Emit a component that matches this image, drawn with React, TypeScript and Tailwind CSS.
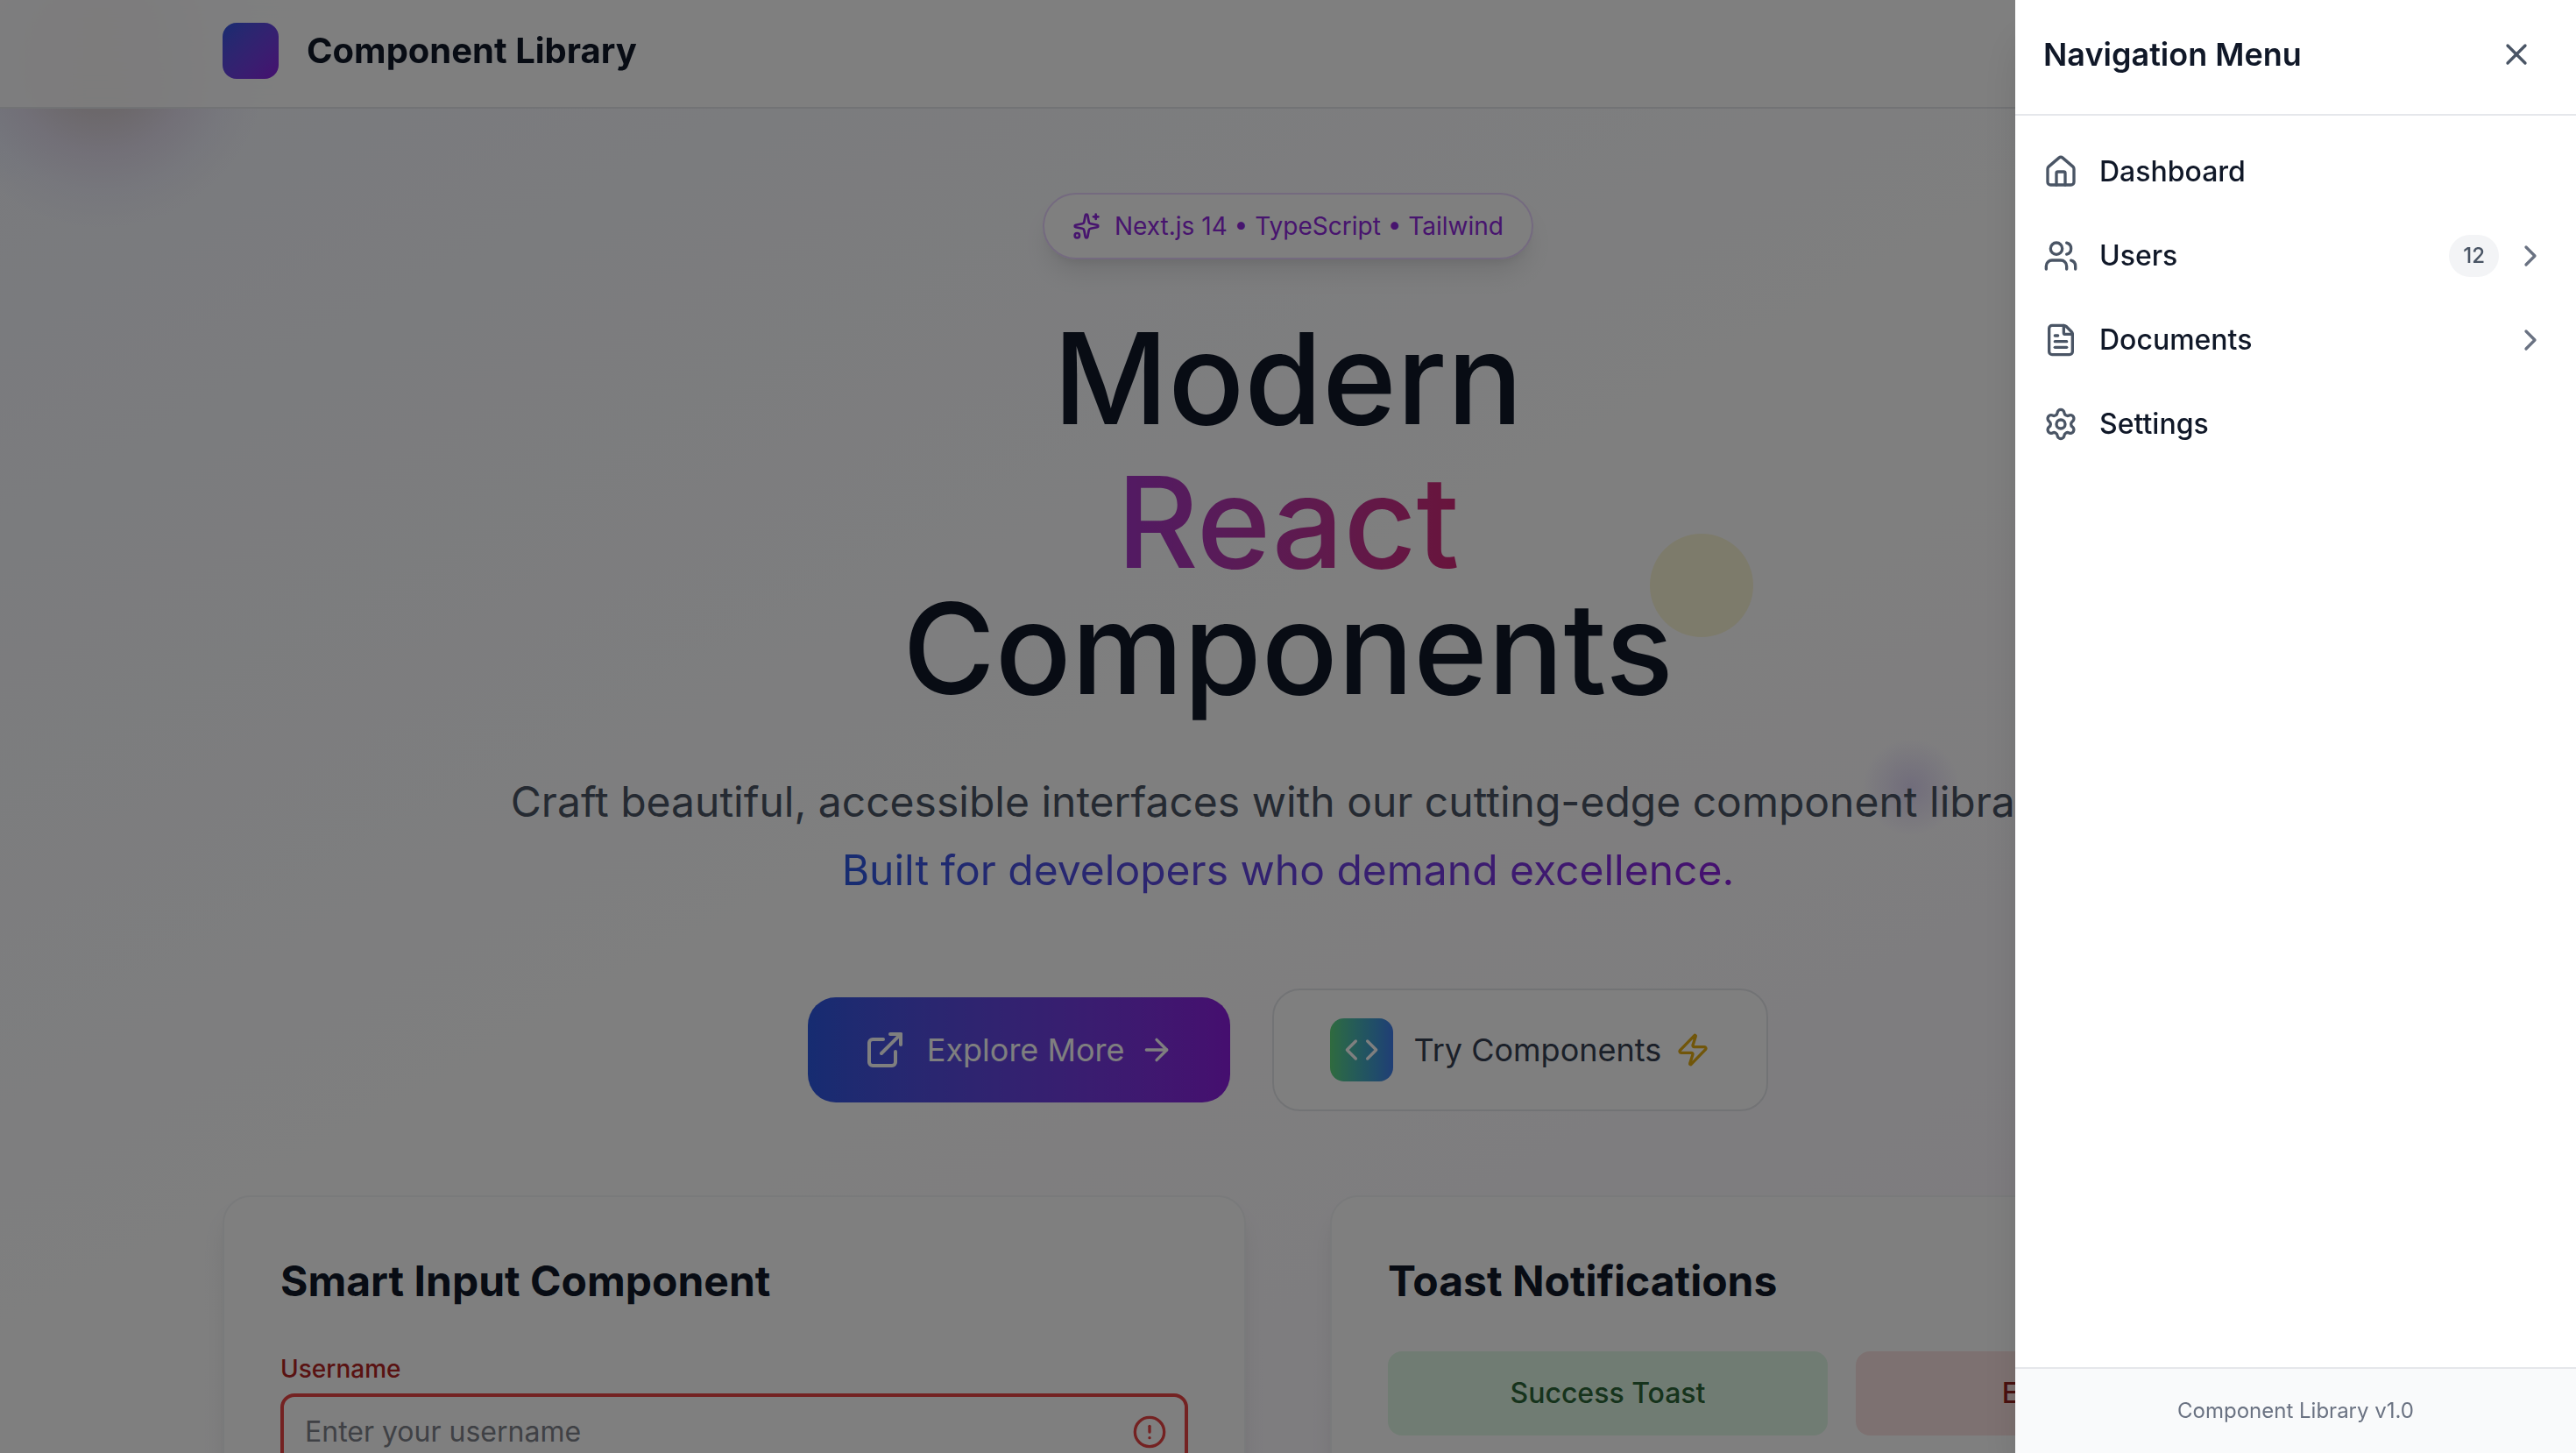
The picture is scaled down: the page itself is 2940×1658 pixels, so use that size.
import React from "react";
import {
  ArrowRight,
  ChevronRight,
  CircleAlert,
  Code,
  ExternalLink,
  FileText,
  House,
  Settings,
  Sparkles,
  Users,
  X,
  Zap,
  type LucideIcon,
} from "lucide-react";

type NavItem = { label: string; icon: LucideIcon; badge?: string; expandable?: boolean };

const navItems: NavItem[] = [
  { label: "Dashboard", icon: House },
  { label: "Users", icon: Users, badge: "12", expandable: true },
  { label: "Documents", icon: FileText, expandable: true },
  { label: "Settings", icon: Settings },
];

function Header() {
  return (
    <header className="relative z-10 border-b-2 border-gray-200 bg-white/85 pt-[26px] pb-8 backdrop-blur-2xl">
      <div className="mx-auto flex max-w-[2560px] items-center gap-8 px-16">
        <div className="size-16 rounded-2xl bg-linear-to-br from-[#2c58e2] to-[#8b1ddf]" />
        <span className="text-[40px] leading-[56px] font-bold text-gray-900">Component Library</span>
      </div>
    </header>
  );
}

function Hero() {
  return (
    <section className="relative flex flex-col items-center pt-24 pb-24 text-center">
      <div className="flex items-center gap-4 rounded-full border-2 border-purple-200 bg-white/80 px-8 py-4 text-[28px] leading-10 text-[#8f29dc] shadow-[0_20px_30px_-6px_rgb(0_0_0/0.1),0_8px_12px_-8px_rgb(0_0_0/0.1)]">
        <Sparkles className="size-8" />
        <span>Next.js 14 • TypeScript • Tailwind</span>
      </div>
      <h1 className="mt-16 text-[144px] leading-none font-medium text-gray-900">
        <span className="block">Modern</span>
        <span className="mx-auto mt-5 block w-fit bg-linear-to-r from-[#a434c8] to-[#d22878] bg-clip-text text-transparent">
          React
        </span>
        <span className="block">Components</span>
      </h1>
      <p className="mt-16 text-[48px] leading-[78px] text-gray-600">
        Craft beautiful, accessible interfaces with our cutting-edge component library.
        <br />
        <span className="bg-linear-to-r from-[#2c58e2] to-[#8b1ddf] bg-clip-text text-transparent">
          Built for developers who demand excellence.
        </span>
      </p>
      <div className="mt-24 flex items-center gap-12 text-[36px] leading-[56px]">
        <button
          type="button"
          className="flex items-center rounded-[32px] bg-linear-to-r from-[#2c58e2] to-[#8b1ddf] px-16 py-8 text-white"
        >
          <ExternalLink className="mr-6 size-12" />
          Explore More
          <ArrowRight className="ml-4 size-10" />
        </button>
        <button
          type="button"
          className="flex items-center rounded-[32px] border-2 border-gray-200 bg-white/80 px-16 py-8 text-gray-700"
        >
          <span className="mr-6 flex size-[72px] items-center justify-center rounded-2xl bg-linear-to-r from-[#5fd67c] to-[#417ceb] text-white">
            <Code className="size-10" />
          </span>
          Try Components
          <Zap className="ml-4 size-10 text-[#e2ac14]" />
        </button>
      </div>
    </section>
  );
}

function Card({ title, children }: { title: string; children: React.ReactNode }) {
  return (
    <section className="rounded-[32px] border-2 border-gray-100 bg-white p-16 shadow-[0_20px_30px_-6px_rgb(0_0_0/0.1),0_8px_12px_-8px_rgb(0_0_0/0.1)]">
      <h2 className="mb-12 text-[48px] leading-[64px] font-bold text-gray-900">{title}</h2>
      {children}
    </section>
  );
}

function Cards() {
  return (
    <div className="relative mx-auto grid w-full max-w-[2560px] grid-cols-2 gap-24 px-16">
      <Card title="Smart Input Component">
        <label htmlFor="username" className="mb-2 block text-[28px] leading-10 font-medium text-[#b32424]">
          Username
        </label>
        <div className="relative">
          <input
            id="username"
            type="text"
            placeholder="Enter your username"
            className="block w-full rounded-2xl border-4 border-[#e84444] bg-white py-4 pr-20 pl-6 text-[32px] leading-[48px] text-gray-900 placeholder:text-[#7f828a]"
          />
          <CircleAlert className="absolute top-1/2 right-6 size-10 -translate-y-1/2 text-[#e84444]" />
        </div>
      </Card>
      <Card title="Toast Notifications">
        <div className="grid grid-cols-2 gap-8 text-[32px] leading-[48px] font-medium">
          <button type="button" className="rounded-2xl bg-[#e1f8e6] py-6 text-[#2c6638]">
            Success Toast
          </button>
          <button type="button" className="rounded-2xl bg-[#fbe3e2] py-6 text-[#932321]">
            Error Toast
          </button>
        </div>
      </Card>
    </div>
  );
}

/* Soft shapes that float behind the hero */
function Decorations() {
  return (
    <div aria-hidden="true">
      <div className="absolute -top-[30px] -left-[110px] size-[240px] rounded-full bg-[radial-gradient(closest-side,rgb(214_230_250/0.8),transparent)]" />
      <div className="absolute -top-[120px] -left-[75px] size-[380px] rounded-full bg-[radial-gradient(closest-side,rgb(216_208_212)_0%,rgb(216_208_214)_30%,rgb(228_222_238/0.9)_55%,rgb(234_234_248/0.6)_78%,transparent_100%)]" />
      <div className="absolute top-[609px] left-[1883px] size-[118px] rounded-full bg-[#fbf6d6]" />
      <div className="absolute top-[843px] left-[2126px] size-[110px] rounded-full bg-[radial-gradient(closest-side,rgb(192_176_236/0.45),transparent)]" />
    </div>
  );
}

function Drawer() {
  return (
    <aside className="fixed inset-y-0 right-0 z-30 flex w-[640px] flex-col bg-white shadow-[0_40px_50px_-10px_rgb(0_0_0/0.15),0_16px_20px_-12px_rgb(0_0_0/0.15)]">
      <div className="flex items-center justify-between border-b-2 border-gray-200 px-8 pt-[26px] pb-8">
        <h2 className="text-[36px] leading-[56px] font-semibold text-gray-900">Navigation Menu</h2>
        <button type="button" aria-label="Close menu" className="p-4 text-gray-600">
          <X className="size-10" />
        </button>
      </div>
      <nav className="grow py-4">
        {navItems.map(({ label, icon: Icon, badge, expandable }) => (
          <a key={label} href="#" className="flex h-24 items-center px-8 text-gray-600">
            <Icon className="mr-6 size-10" />
            <span className="grow text-[32px] leading-[48px] font-medium text-gray-900">{label}</span>
            {badge && (
              <span className="rounded-full bg-gray-100 px-4 py-2 text-[24px] leading-8 font-medium">{badge}</span>
            )}
            {expandable && <ChevronRight className="ml-4 size-10 text-gray-500" />}
          </a>
        ))}
      </nav>
      <footer className="border-t-2 border-gray-200 bg-gray-50 p-8 text-center text-[24px] leading-8 text-gray-500">
        Component Library v1.0
      </footer>
    </aside>
  );
}

export default function App() {
  return (
    <div className="relative h-screen overflow-hidden bg-linear-to-br from-[#f2f4fb] via-white to-purple-50 font-['Inter',sans-serif]">
      <Decorations />
      <Header />
      <main>
        <Hero />
        <Cards />
      </main>
      <div className="fixed inset-0 z-20 bg-black/50" />
      <Drawer />
    </div>
  );
}
